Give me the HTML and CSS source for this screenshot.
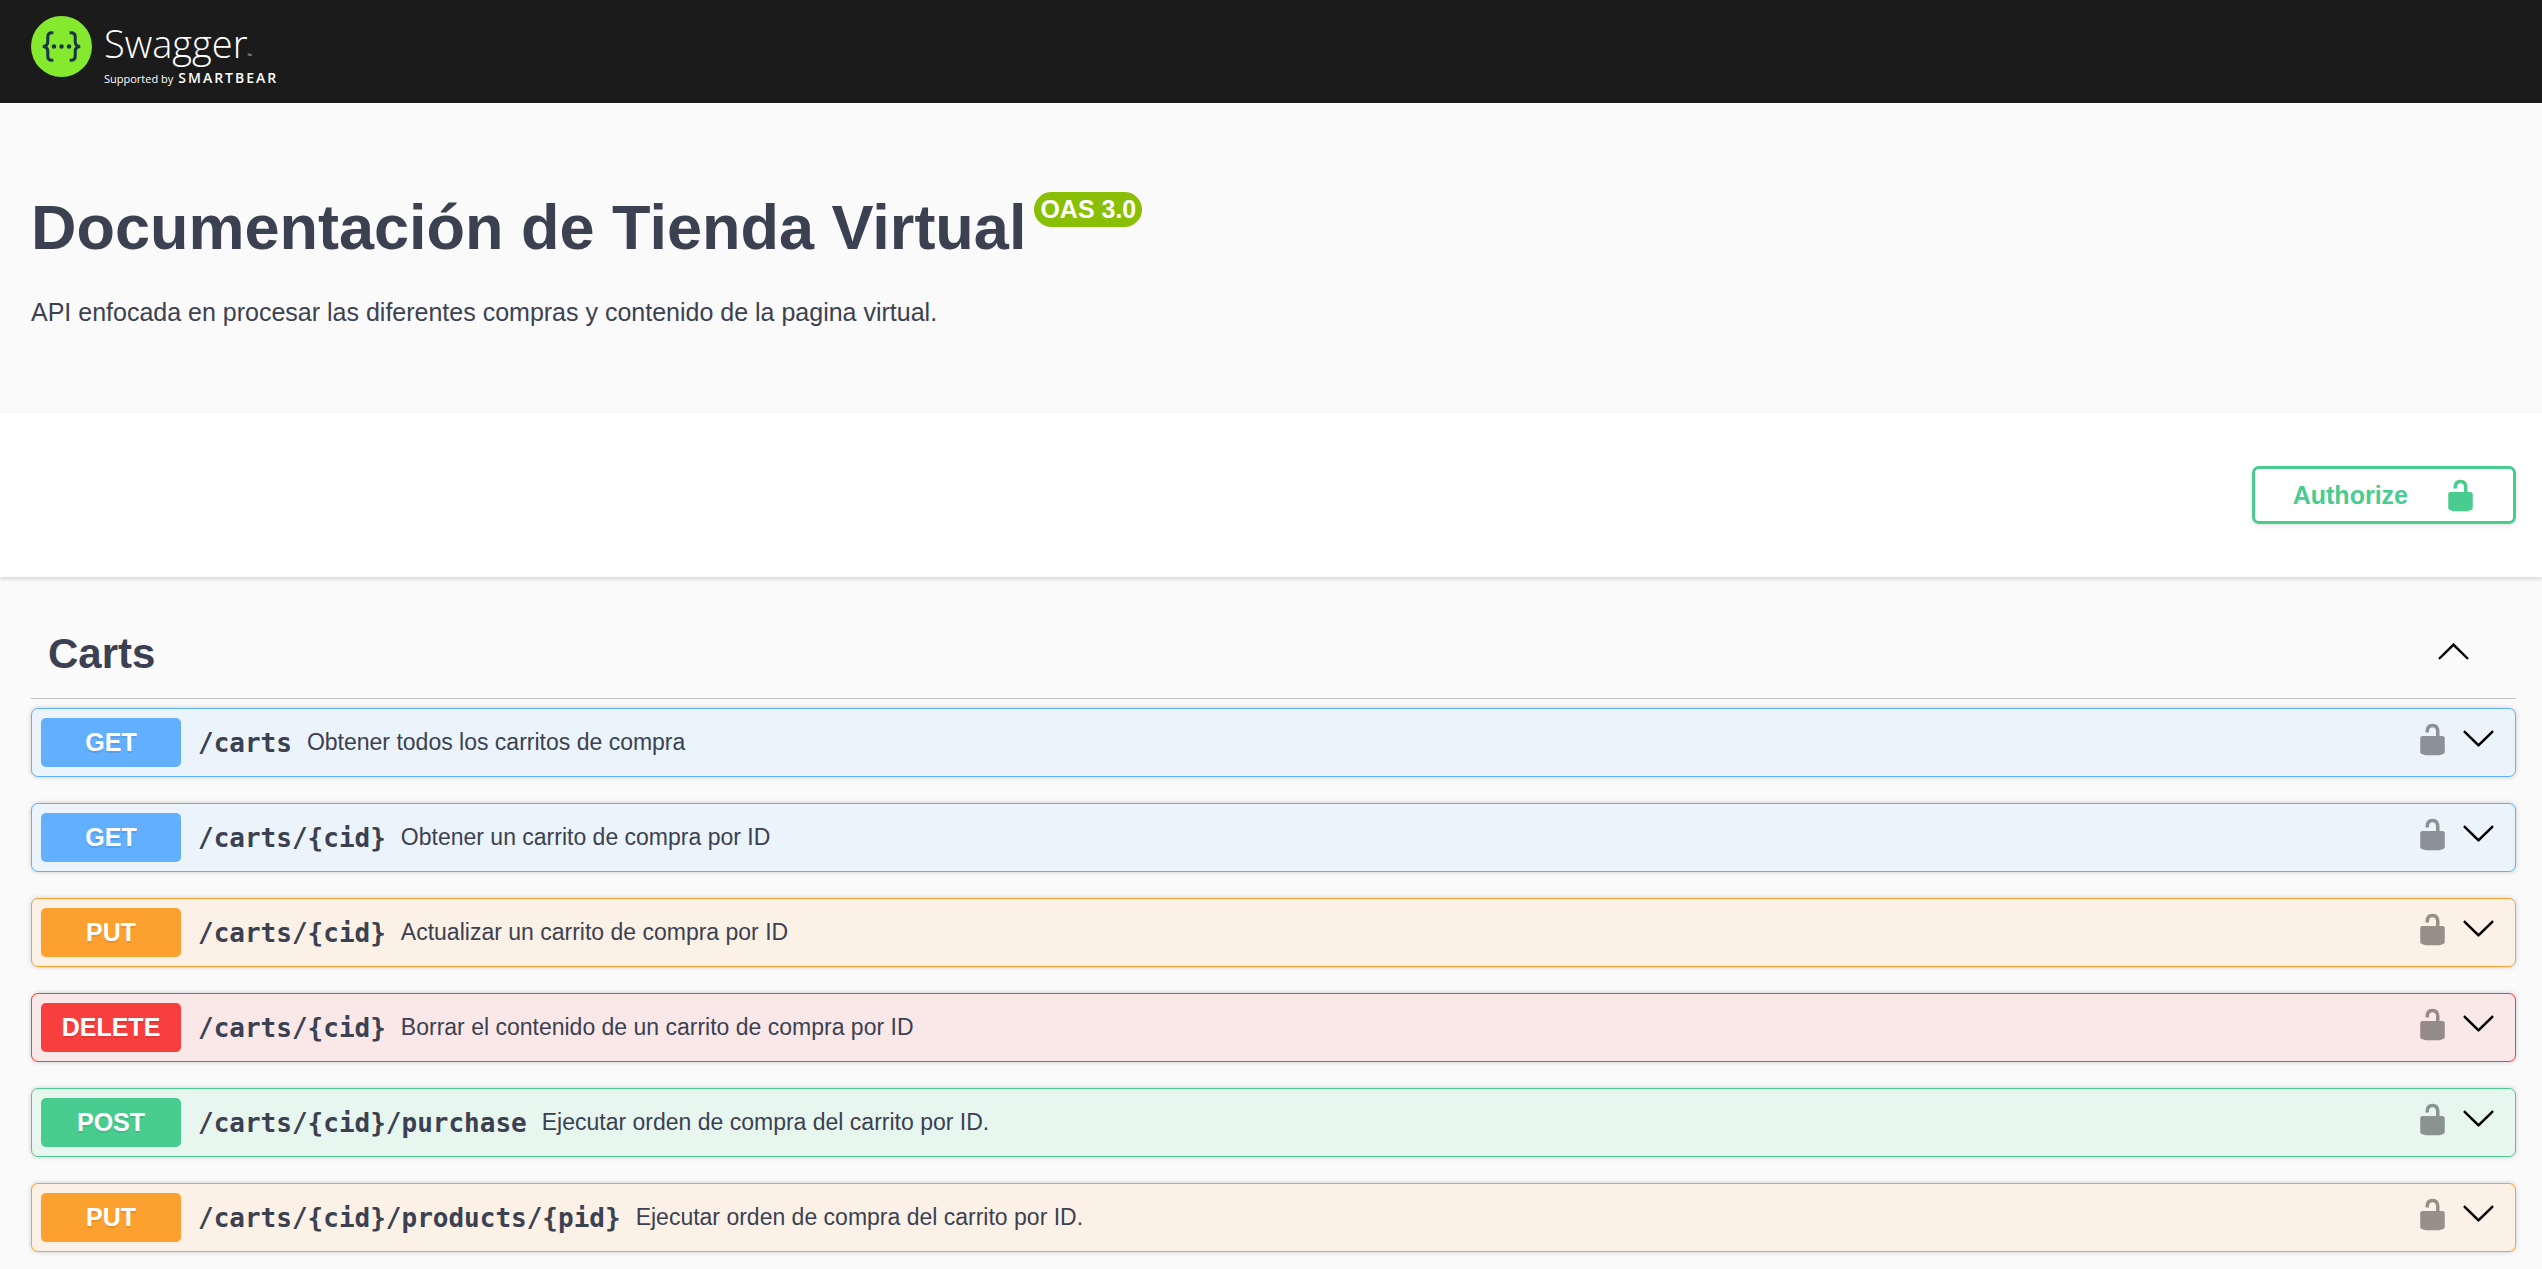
FILE: index.html
```html
<!DOCTYPE html>
<html lang="es">
<head>
<meta charset="utf-8">
<meta name="viewport" content="width=device-width, initial-scale=1">
<title>Documentación de Tienda Virtual</title>
<link rel="stylesheet" href="styles.css">
</head>
<body>
<svg class="sprite" aria-hidden="true">
  <symbol id="unlocked" viewBox="0 0 20 20"><path d="M15.8 8H14V5.6C14 2.703 12.665 1 10 1 7.334 1 6 2.703 6 5.6V6h2v-.801C8 3.754 8.797 3 10 3c1.203 0 2 .754 2 2.199V8H4c-.553 0-1 .646-1 1.199V17c0 .549.428 1.139.951 1.307l1.197.387C5.672 18.861 6.55 19 7.1 19h5.8c.549 0 1.428-.139 1.951-.307l1.196-.387c.524-.167.953-.757.953-1.306V9.199C17 8.646 16.352 8 15.8 8z"/></symbol>
  <symbol id="arrow-up" viewBox="0 0 20 20"><path d="M17.418 14.908c.272.268.709.268.979 0s.271-.701 0-.969l-7.908-7.83c-.27-.268-.707-.268-.979 0l-7.908 7.83c-.27.268-.27.701 0 .969.271.268.709.268.979 0L10 7.767l7.418 7.141z"/></symbol>
  <symbol id="arrow-down" viewBox="0 0 20 20"><path d="M17.418 5.109c.272-.268.709-.268.979 0s.271.701 0 .969l-7.908 7.83c-.27.268-.707.268-.979 0l-7.908-7.83c-.27-.268-.27-.701 0-.969.271-.268.709-.268.979 0L10 12.250l7.418-7.141z"/></symbol>
</svg>

<header class="topbar">
  <a class="brand" href="#">
    <svg class="brand-mark" viewBox="0 0 60 60" aria-hidden="true">
      <circle cx="30" cy="30" r="30" fill="#85ea2d"/>
      <g fill="none" stroke="#173647" stroke-width="3">
        <path d="M22 16.500h-1.500q-4 0-4 4.200v4.300q0 5-5 5q5 0 5 5v4.300q0 4.200 4 4.200h1.500"/>
        <path d="M38 16.500h1.500q4 0 4 4.200v4.300q0 5 5 5q-5 0-5 5v4.300q0 4.200-4 4.200h-1.500"/>
      </g>
      <g fill="#173647"><circle cx="22.600" cy="30" r="2.200"/><circle cx="30" cy="30" r="2.200"/><circle cx="37.400" cy="30" r="2.200"/></g>
    </svg>
    <span class="brand-text">
      <span class="brand-name">Swagger<small class="brand-tm">™</small></span>
      <span class="brand-support">Supported by <b class="brand-owner">SMARTBEAR</b></span>
    </span>
  </a>
</header>

<main>
  <section class="info">
    <div class="info-heading">
      <h1 class="info-title">Documentación de Tienda Virtual</h1>
      <span class="version">OAS 3.0</span>
    </div>
    <p class="info-description">API enfocada en procesar las diferentes compras y contenido de la pagina virtual.</p>
  </section>

  <section class="schemes">
    <button class="authorize" type="button">Authorize<svg class="icon" aria-hidden="true"><use href="#unlocked"/></svg></button>
  </section>

  <section class="tag">
    <header class="tag-header">
      <h2 class="tag-title">Carts</h2>
      <button class="icon-button" type="button" aria-label="Collapse Carts"><svg class="icon"><use href="#arrow-up"/></svg></button>
    </header>
    <div class="operations">
      <div class="operation get">
        <button class="summary" type="button"><span class="method">GET</span><span class="path">/carts</span><span class="description">Obtener todos los carritos de compra</span></button>
        <div class="controls">
          <button class="icon-button lock" type="button" aria-label="Authorization"><svg class="icon"><use href="#unlocked"/></svg></button>
          <button class="icon-button" type="button" aria-label="Expand"><svg class="icon"><use href="#arrow-down"/></svg></button>
        </div>
      </div>
      <div class="operation get">
        <button class="summary" type="button"><span class="method">GET</span><span class="path">/carts/{cid}</span><span class="description">Obtener un carrito de compra por ID</span></button>
        <div class="controls">
          <button class="icon-button lock" type="button" aria-label="Authorization"><svg class="icon"><use href="#unlocked"/></svg></button>
          <button class="icon-button" type="button" aria-label="Expand"><svg class="icon"><use href="#arrow-down"/></svg></button>
        </div>
      </div>
      <div class="operation put">
        <button class="summary" type="button"><span class="method">PUT</span><span class="path">/carts/{cid}</span><span class="description">Actualizar un carrito de compra por ID</span></button>
        <div class="controls">
          <button class="icon-button lock" type="button" aria-label="Authorization"><svg class="icon"><use href="#unlocked"/></svg></button>
          <button class="icon-button" type="button" aria-label="Expand"><svg class="icon"><use href="#arrow-down"/></svg></button>
        </div>
      </div>
      <div class="operation delete">
        <button class="summary" type="button"><span class="method">DELETE</span><span class="path">/carts/{cid}</span><span class="description">Borrar el contenido de un carrito de compra por ID</span></button>
        <div class="controls">
          <button class="icon-button lock" type="button" aria-label="Authorization"><svg class="icon"><use href="#unlocked"/></svg></button>
          <button class="icon-button" type="button" aria-label="Expand"><svg class="icon"><use href="#arrow-down"/></svg></button>
        </div>
      </div>
      <div class="operation post">
        <button class="summary" type="button"><span class="method">POST</span><span class="path">/carts/{cid}/purchase</span><span class="description">Ejecutar orden de compra del carrito por ID.</span></button>
        <div class="controls">
          <button class="icon-button lock" type="button" aria-label="Authorization"><svg class="icon"><use href="#unlocked"/></svg></button>
          <button class="icon-button" type="button" aria-label="Expand"><svg class="icon"><use href="#arrow-down"/></svg></button>
        </div>
      </div>
      <div class="operation put">
        <button class="summary" type="button"><span class="method">PUT</span><span class="path">/carts/{cid}/products/{pid}</span><span class="description">Ejecutar orden de compra del carrito por ID.</span></button>
        <div class="controls">
          <button class="icon-button lock" type="button" aria-label="Authorization"><svg class="icon"><use href="#unlocked"/></svg></button>
          <button class="icon-button" type="button" aria-label="Expand"><svg class="icon"><use href="#arrow-down"/></svg></button>
        </div>
      </div>
    </div>
  </section>
</main>
</body>
</html>
```
FILE: styles.css
```css
* {
  box-sizing: border-box;
}

body {
  margin: 0;
  background: #fafafa;
  color: #3b4151;
  font-family: "Liberation Sans", Arial, sans-serif;
  font-size: 25px;
}

button {
  margin: 0;
  padding: 0;
  border: 0;
  background: none;
  color: inherit;
  font: inherit;
  cursor: pointer;
}

.sprite {
  display: none;
}

.icon {
  display: block;
  width: 35px;
  height: 35px;
  fill: currentColor;
}

.topbar {
  padding: 16px 31px;
  background: #1b1b1b;
}

.brand {
  display: inline-flex;
  gap: 12px;
  min-height: 71px;
  color: #fff;
  font-family: "Open Sans", "Noto Sans", sans-serif;
  text-decoration: none;
  vertical-align: top;
}

.brand-mark {
  width: 61px;
  height: 61px;
}

.brand-text {
  display: flex;
  flex-direction: column;
}

.brand-name {
  font-size: 38px;
  font-weight: 300;
  line-height: 54px;
}

.brand-tm {
  font-size: 6px;
  line-height: 6px;
}

.brand-support {
  display: flex;
  align-items: baseline;
  gap: 5px;
  font-size: 11px;
  line-height: 15px;
}

.brand-owner {
  font-size: 14px;
  font-weight: 600;
  letter-spacing: 2px;
}

.info {
  padding: 89px 31px 86px;
}

.info-heading {
  display: flex;
  align-items: flex-start;
  gap: 8px;
}

.info-title {
  margin: 0;
  font-size: 63px;
  line-height: 70px;
}

.version {
  padding: 0 6px;
  border-radius: 18px;
  background: #89bf04;
  color: #fff;
  font-weight: 700;
  line-height: 35px;
}

.info-description {
  margin: 35px 0 0;
  line-height: 30px;
}

.schemes {
  display: flex;
  justify-content: flex-end;
  padding: 53px 26px 53px 31px;
  background: #fff;
  box-shadow: 0 2px 4px rgba(0, 0, 0, 0.15);
}

.authorize {
  display: flex;
  align-items: center;
  gap: 35px;
  height: 58px;
  padding: 0 35px 0 38px;
  border: 3px solid #49cc90;
  border-radius: 7px;
  box-shadow: 0 2px 4px rgba(0, 0, 0, 0.1);
  color: #49cc90;
  font-weight: 700;
}

.tag {
  padding: 34px 26px 16px 31px;
}

.tag-header {
  display: flex;
  align-items: flex-start;
  justify-content: space-between;
  height: 88px;
  padding: 22px 45px 0 17px;
  border-bottom: 1px solid rgba(59, 65, 81, 0.3);
}

.tag-title {
  margin: 0;
  font-size: 42px;
  line-height: 42px;
}

.icon-button {
  color: #000;
}

.operations {
  display: flex;
  flex-direction: column;
  gap: 26px;
  margin-top: 9px;
}

.operation {
  display: flex;
  padding: 9px 19px 9px 9px;
  border: 1px solid var(--accent);
  border-radius: 7px;
  background: var(--tint);
  box-shadow: 0 0 5px rgba(0, 0, 0, 0.19);
}

.get {
  --accent: #61affe;
  --tint: #ebf3fb;
}

.put {
  --accent: #fca130;
  --tint: #fbf1e6;
}

.delete {
  --accent: #f93e3e;
  --tint: #fae7e7;
}

.post {
  --accent: #49cc90;
  --tint: #e8f6f0;
}

.summary {
  display: flex;
  flex: 1;
  align-items: center;
  text-align: left;
}

.method {
  width: 140px;
  border-radius: 5px;
  background: var(--accent);
  color: #fff;
  font-weight: 700;
  line-height: 49px;
  text-align: center;
  text-shadow: 0 2px 0 rgba(0, 0, 0, 0.1);
}

.path {
  margin: 0 15px 0 17px;
  font-family: "DejaVu Sans Mono", monospace;
  font-size: 26px;
  font-weight: 700;
}

.description {
  font-size: 23px;
}

.controls {
  display: flex;
  align-items: flex-start;
  gap: 11px;
  padding-top: 4px;
}

.lock {
  opacity: 0.4;
}
```
